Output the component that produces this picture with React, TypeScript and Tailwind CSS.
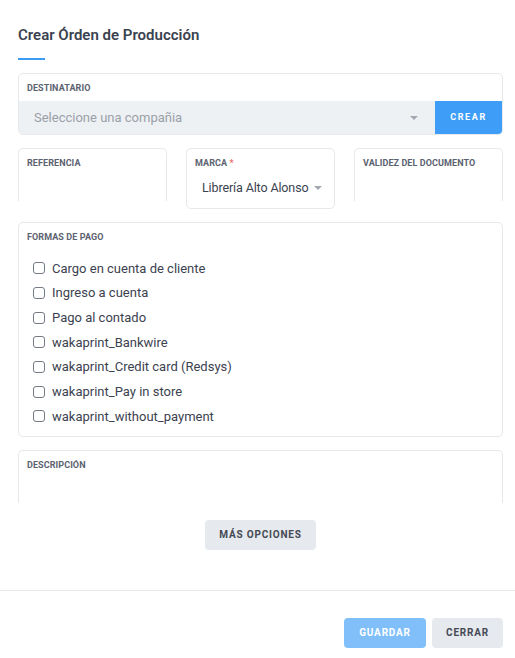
const pagos = [
  'Cargo en cuenta de cliente',
  'Ingreso a cuenta',
  'Pago al contado',
  'wakaprint_Bankwire',
  'wakaprint_Credit card (Redsys)',
  'wakaprint_Pay in store',
  'wakaprint_without_payment',
];

function FieldLabel({ children }: { children: React.ReactNode }) {
  return (
    <div className="text-[9px] font-bold uppercase leading-none tracking-[0.01em] text-[#5b6270]">
      {children}
    </div>
  );
}

function Caret() {
  return <span className="inline-block h-0 w-0 border-x-[4px] border-t-[4px] border-x-transparent border-t-[#a3a8b0]" />;
}

export default function App() {
  return (
    <div
      className="flex h-[658px] w-[515px] flex-col bg-white text-[#3c4250]"
      style={{ fontFamily: 'Roboto, "Noto Sans", sans-serif' }}
    >
      <div className="flex flex-col pl-[18px] pr-[12px] pt-[25px]">
        {/* Title */}
        <h1 className="text-[15px] font-semibold leading-5 text-[#3a4250]">Crear Órden de Producción</h1>
        <div className="mt-[13px] h-[2px] w-[27px] bg-[#3b9cf5]" />

        {/* Destinatario */}
        <div className="mt-[13px] overflow-hidden rounded-[5px] border border-[#e6e8ec]">
          <div className="px-[8px] pt-[10px] pb-[8px]">
            <FieldLabel>Destinatario</FieldLabel>
          </div>
          <div className="flex h-[33px]">
            <div className="flex flex-1 items-center justify-between bg-[#eef1f4] pl-[15px] pr-[17px] text-[13px] text-[#9aa0a8]">
              <span>Seleccione una compañia</span>
              <Caret />
            </div>
            <button className="w-[67px] bg-[#3d9df7] text-[9px] font-bold tracking-[0.18em] text-white">CREAR</button>
          </div>
        </div>

        {/* Row of three */}
        <div className="mt-[13px] grid grid-cols-3 gap-[19px]">
          <div className="h-[53px] rounded-t-[5px] border-x border-t border-[#e6e8ec] px-[8px] pt-[10px]">
            <FieldLabel>Referencia</FieldLabel>
          </div>
          <div className="h-[61px] rounded-[5px] border border-[#e6e8ec] px-[8px] pt-[10px]">
            <FieldLabel>
              Marca <span className="text-[#f06a6a]">*</span>
            </FieldLabel>
            <div className="mt-[11px] flex items-center gap-[6px] whitespace-nowrap pl-[7px] text-[12.5px] tracking-[-0.01em] text-[#3c4250]">
              <span>Librería Alto Alonso</span>
              <Caret />
            </div>
          </div>
          <div className="h-[53px] rounded-t-[5px] border-x border-t border-[#e6e8ec] px-[8px] pt-[10px]">
            <FieldLabel>Validez del documento</FieldLabel>
          </div>
        </div>

        {/* Formas de pago */}
        <div className="mt-[13px] rounded-[5px] border border-[#e6e8ec] px-[8px] pt-[10px] pb-[10px]">
          <FieldLabel>Formas de pago</FieldLabel>
          <div className="mt-[17px] flex flex-col gap-[6px] pl-[6px]">
            {pagos.map((p) => (
              <label key={p} className="flex h-[18.7px] items-center gap-[7px] text-[13px] text-[#3c4250]">
                <span className="h-[12px] w-[12px] rounded-[3px] border border-[#757b85] bg-white" />
                {p}
              </label>
            ))}
          </div>
        </div>

        {/* Descripción */}
        <div className="mt-[13px] h-[53px] rounded-t-[5px] border-x border-t border-[#e6e8ec] px-[8px] pt-[10px]">
          <FieldLabel>Descripción</FieldLabel>
        </div>

        {/* Más opciones */}
        <div className="mt-[17px] flex justify-center">
          <button className="h-[30px] w-[111px] rounded-[4px] bg-[#e6e9ed] text-[10px] font-bold tracking-[0.08em] text-[#444a55]">
            MÁS OPCIONES
          </button>
        </div>
      </div>

      <div className="mt-[40px] h-px w-full bg-[#e6e8ec]" />

      <div className="flex justify-end gap-[6px] px-[12px] pt-[27px]">
        <button className="h-[30px] w-[82px] rounded-[4px] bg-[#80bff9] text-[10px] font-bold tracking-[0.08em] text-white">
          GUARDAR
        </button>
        <button className="h-[30px] w-[71px] rounded-[4px] bg-[#e6e9ed] text-[10px] font-bold tracking-[0.08em] text-[#444a55]">
          CERRAR
        </button>
      </div>
    </div>
  );
}
